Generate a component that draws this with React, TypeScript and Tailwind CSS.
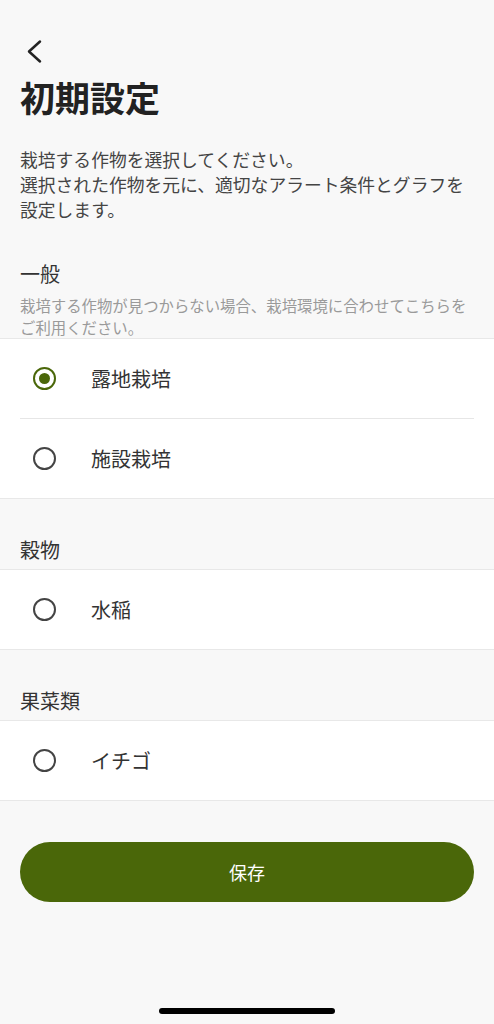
import React, { useState } from 'react';

type Option = { id: string; label: string };
type Group = { title: string; note?: string; options: Option[] };

const groups: Group[] = [
  {
    title: '一般',
    note: '栽培する作物が見つからない場合、栽培環境に合わせてこちらをご利用ください。',
    options: [
      { id: 'outdoor', label: '露地栽培' },
      { id: 'facility', label: '施設栽培' },
    ],
  },
  { title: '穀物', options: [{ id: 'rice', label: '水稲' }] },
  { title: '果菜類', options: [{ id: 'strawberry', label: 'イチゴ' }] },
];

const font = { fontFamily: '"Noto Sans CJK JP", "Noto Sans", sans-serif' };

const Radio: React.FC<{ checked: boolean }> = ({ checked }) => (
  <span
    className={`flex h-[23px] w-[23px] items-center justify-center rounded-full border-[2.5px] ${
      checked ? 'border-[#4a6709]' : 'border-[#444444]'
    }`}
  >
    {checked && <span className="h-[11px] w-[11px] rounded-full bg-[#4a6709]" />}
  </span>
);

const App: React.FC = () => {
  const [selected, setSelected] = useState('outdoor');

  return (
    <div className="relative min-h-[1024px] bg-[#f8f8f8] text-[#333333]" style={font}>
      <div className="px-5 pt-[38px]">
        <button className="block h-[26px] w-[26px]">
          <svg width="26" height="26" viewBox="0 0 26 26" fill="none" stroke="#222" strokeWidth="2.5" strokeLinecap="round" strokeLinejoin="round">
            <path d="M20 3.5 L9 13.5 L20 23.5" />
          </svg>
        </button>
        <h1 className="mt-[12px] text-[35px] font-bold leading-[42px] text-[#222222]">初期設定</h1>
        <p className="mt-[29px] text-[17.8px] leading-[25px] text-[#444444]">
          栽培する作物を選択してください。
          <br />
          選択された作物を元に、適切なアラート条件とグラフを設定します。
        </p>
      </div>

      {groups.map((g, gi) => (
        <div key={g.title}>
          <div className={`px-5 ${gi === 0 ? 'pt-[38px]' : 'pt-[37px] pb-[5px]'}`}>
            <h2 className="text-[20px] leading-[28px] text-[#333333]">{g.title}</h2>
            {g.note && (
              <p className="mt-[6px] text-[15.4px] leading-[22px] text-[#9a9a9a]">{g.note}</p>
            )}
          </div>
          <div className="border-y border-[#e8e8e8] bg-white">
            {g.options.map((o, i) => (
              <div key={o.id}>
                {i > 0 && <div className="mx-5 h-px bg-[#e6e6e6]" />}
                <button
                  onClick={() => setSelected(o.id)}
                  className="flex h-[79px] w-full items-center pl-[33px] text-left"
                >
                  <Radio checked={selected === o.id} />
                  <span className="ml-[35px] text-[20px] text-[#333333]">{o.label}</span>
                </button>
              </div>
            ))}
          </div>
        </div>
      ))}

      <div className="px-5 pt-[41px]">
        <button className="flex h-[60px] w-full items-center justify-center rounded-full bg-[#4a6709] text-[18px] text-white">
          保存
        </button>
      </div>

      <div className="absolute bottom-[10px] left-1/2 h-[6px] w-[176px] -translate-x-1/2 rounded-full bg-black" />
    </div>
  );
};

export default App;
